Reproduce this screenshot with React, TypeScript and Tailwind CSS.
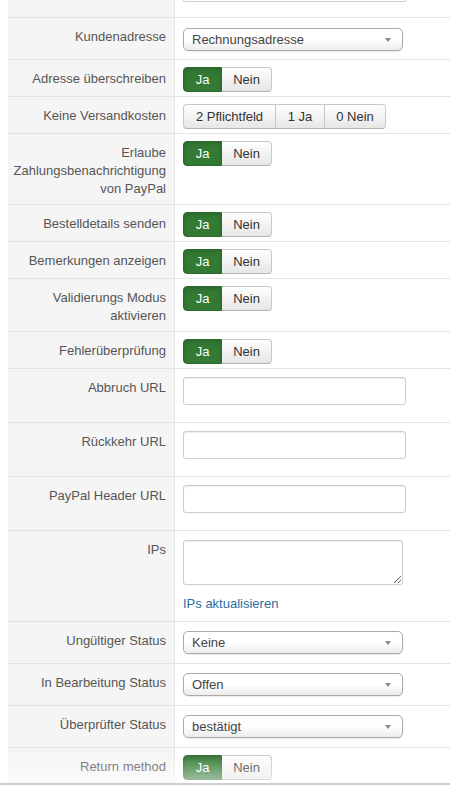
import type { ReactNode } from 'react';

function Row({ label, pad, children }: { label: ReactNode; pad: string; children: ReactNode }) {
  return (
    <div className="flex border-b border-[#e3e3e3]">
      <div className="w-[167px] shrink-0 border-r border-[#e6e6e6] bg-[#f5f5f5] pr-[8px] pt-[10px] pb-[6px] text-right text-[13px] leading-[18px] text-[#555]">
        {label}
      </div>
      <div className={`flex-1 pl-[8px] ${pad}`}>{children}</div>
    </div>
  );
}

function YesNo() {
  return (
    <div className="flex h-[25px] text-[13px]">
      <span className="flex w-[39px] items-center justify-center rounded-l-[4px] border border-[#2b6a2c] bg-[#337a34] text-white shadow-[inset_0_2px_4px_rgba(0,0,0,0.15)]">
        Ja
      </span>
      <span className="flex w-[50px] items-center justify-center rounded-r-[4px] border border-l-0 border-[#c8c8c8] border-b-[#b3b3b3] bg-gradient-to-b from-white to-[#e6e6e6] text-[#333]">
        Nein
      </span>
    </div>
  );
}

function Choices() {
  const opts = [
    { text: '2 Pflichtfeld', w: 'w-[92px] rounded-l-[4px] border-l' },
    { text: '1 Ja', w: 'w-[49px] border-l' },
    { text: '0 Nein', w: 'w-[62px] rounded-r-[4px] border-x' },
  ];
  return (
    <div className="flex h-[25px] text-[13px] text-[#333]">
      {opts.map((o) => (
        <span
          key={o.text}
          className={`flex items-center justify-center border-y border-[#c8c8c8] border-b-[#b3b3b3] bg-gradient-to-b from-white to-[#e6e6e6] ${o.w}`}
        >
          {o.text}
        </span>
      ))}
    </div>
  );
}

function Select({ value }: { value: string }) {
  return (
    <div className="relative flex h-[23px] w-[220px] items-center rounded-[5px] border border-[#aaa] bg-gradient-to-b from-white via-white to-[#ececec] pl-[8px] pt-[1px] text-[13px] text-[#444] shadow-[0_1px_1px_rgba(0,0,0,0.08)]">
      {value}
      <svg className="absolute right-[11px] top-[9px]" width="6" height="4" viewBox="0 0 6 4">
        <polygon points="0,0 6,0 3,4" fill="#888" />
      </svg>
    </div>
  );
}

function TextInput() {
  return (
    <div className="h-[28px] w-[223px] rounded-[3px] border border-[#ccc] bg-white shadow-[inset_0_1px_1px_rgba(0,0,0,0.075)]" />
  );
}

export default function App() {
  return (
    <div className="relative h-[785px] w-[450px] overflow-hidden bg-white font-['Liberation_Sans',Arial,sans-serif]">
      <div className="pl-[8px]">
        {/* tail of the field above */}
        <div className="flex h-[18px] border-b border-[#e3e3e3]">
          <div className="w-[167px] shrink-0 border-r border-[#e6e6e6] bg-[#f5f5f5]" />
          <div className="pl-[8px]">
            <div className="h-[2px] w-[223px] rounded-b-[3px] border-x border-b border-[#ccc]" />
          </div>
        </div>

        <Row label="Kundenadresse" pad="pt-[10px] pb-[8px]">
          <Select value="Rechnungsadresse" />
        </Row>
        <Row label="Adresse überschreiben" pad="pt-[7px] pb-[4px]">
          <YesNo />
        </Row>
        <Row label="Keine Versandkosten" pad="pt-[7px] pb-[4px]">
          <Choices />
        </Row>
        <Row
          label={
            <>
              Erlaube
              <br />
              Zahlungsbenachrichtigung
              <br />
              von PayPal
            </>
          }
          pad="pt-[7px] pb-[4px]"
        >
          <YesNo />
        </Row>
        <Row label="Bestelldetails senden" pad="pt-[7px] pb-[4px]">
          <YesNo />
        </Row>
        <Row label="Bemerkungen anzeigen" pad="pt-[7px] pb-[4px]">
          <YesNo />
        </Row>
        <Row
          label={
            <>
              Validierungs Modus
              <br />
              aktivieren
            </>
          }
          pad="pt-[7px] pb-[4px]"
        >
          <YesNo />
        </Row>
        <Row label="Fehlerüberprüfung" pad="pt-[7px] pb-[4px]">
          <YesNo />
        </Row>
        <Row label="Abbruch URL" pad="pt-[8px] pb-[17px]">
          <TextInput />
        </Row>
        <Row label="Rückkehr URL" pad="pt-[8px] pb-[17px]">
          <TextInput />
        </Row>
        <Row label="PayPal Header URL" pad="pt-[8px] pb-[17px]">
          <TextInput />
        </Row>
        <Row label="IPs" pad="pt-[9px] pb-[8px]">
          <textarea
            readOnly
            className="block h-[45px] w-[220px] rounded-[3px] border border-[#ccc] bg-white shadow-[inset_0_1px_1px_rgba(0,0,0,0.075)] outline-none"
          />
          <a className="mt-[10px] block text-[13px] leading-[18px] text-[#2d6ca2]">IPs aktualisieren</a>
        </Row>
        <Row label="Ungültiger Status" pad="pt-[9px] pb-[9px]">
          <Select value="Keine" />
        </Row>
        <Row label="In Bearbeitung Status" pad="pt-[9px] pb-[9px]">
          <Select value="Offen" />
        </Row>
        <Row label="Überprüfter Status" pad="pt-[9px] pb-[9px]">
          <Select value="bestätigt" />
        </Row>
        <div className="flex">
          <div className="w-[167px] shrink-0 border-r border-[#e6e6e6] bg-[#f5f5f5] pr-[8px] pt-[10px] pb-[6px] text-right text-[13px] leading-[18px] text-[#555]">
            Return method
          </div>
          <div className="flex-1 pl-[8px] pt-[7px] pb-[3px]">
            <YesNo />
          </div>
        </div>
      </div>
      <div className="h-[2px] bg-[#cfcfcf]" />

      {/* fade over the last row */}
      <div className="pointer-events-none absolute left-0 right-0 top-[753px] h-[29px] bg-gradient-to-b from-white/0 to-white/55" />
    </div>
  );
}
